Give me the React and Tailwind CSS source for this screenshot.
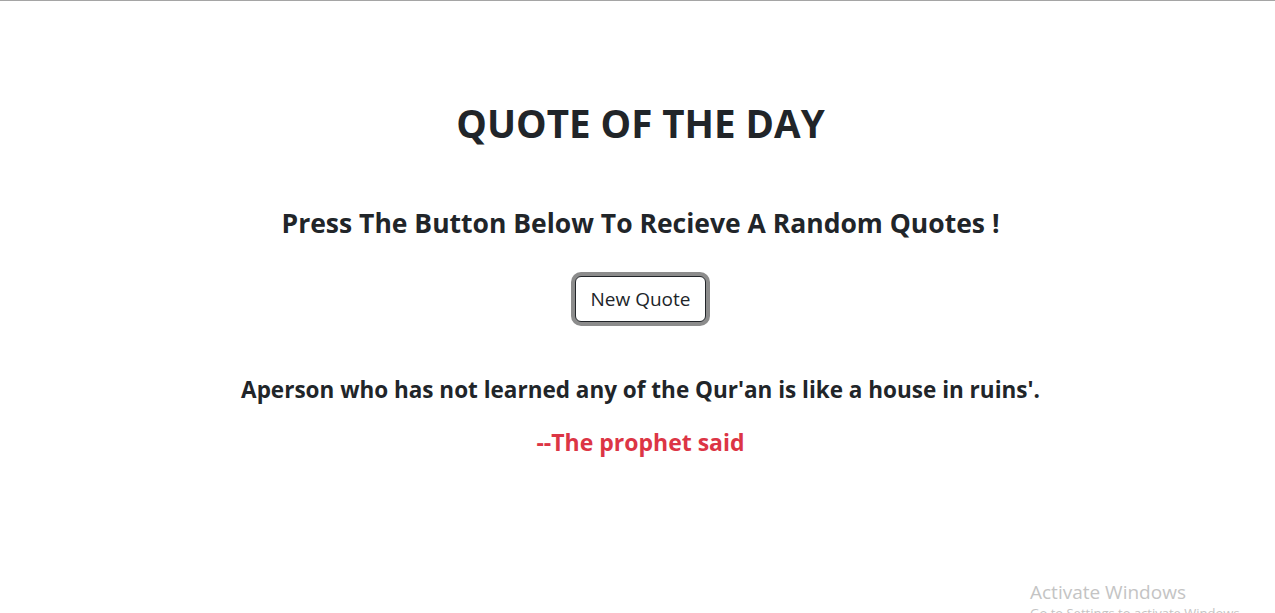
import React, { useState } from 'react';

const quotes = [
  { text: "Aperson who has not learned any of the Qur'an is like a house in ruins'.", author: 'The prophet said' },
];

export default function App() {
  const [idx, setIdx] = useState(0);
  const q = quotes[idx];

  return (
    <div className="relative min-h-screen w-full overflow-hidden border-t border-[#a5a5a5] bg-white font-['Open_Sans',sans-serif] text-[#212529]">
      <div className="flex flex-col items-center pl-[6px] text-center">
        <h1 className="mt-[98px] text-[38.5px] font-bold leading-[48px]">QUOTE OF THE DAY</h1>
        <h3 className="mt-[61px] text-[26.5px] font-bold leading-[30px]">
          Press The Button Below To Recieve A Random Quotes !
        </h3>
        <button
          onClick={() => setIdx((idx + 1) % quotes.length)}
          className="mt-[38px] h-[46px] w-[131px] rounded-md border border-[#212529] bg-white text-[19px] ring-4 ring-[#8c8c8c]"
        >
          New Quote
        </button>
        <p className="mt-[53px] text-[22.5px] font-bold leading-[30px]">{q.text}</p>
        <p className="mt-[22px] text-[23px] font-bold leading-[30px] text-[#dc3545]">--{q.author}</p>
      </div>

      {/* windows watermark */}
      <div className="pointer-events-none absolute left-[1030px] top-[579px] font-['Open_Sans',sans-serif] text-[#c4c4c4]">
        <div className="text-[19px] leading-[24px]">Activate Windows</div>
        <div className="text-[13px] leading-[18px]">Go to Settings to activate Windows.</div>
      </div>
    </div>
  );
}
